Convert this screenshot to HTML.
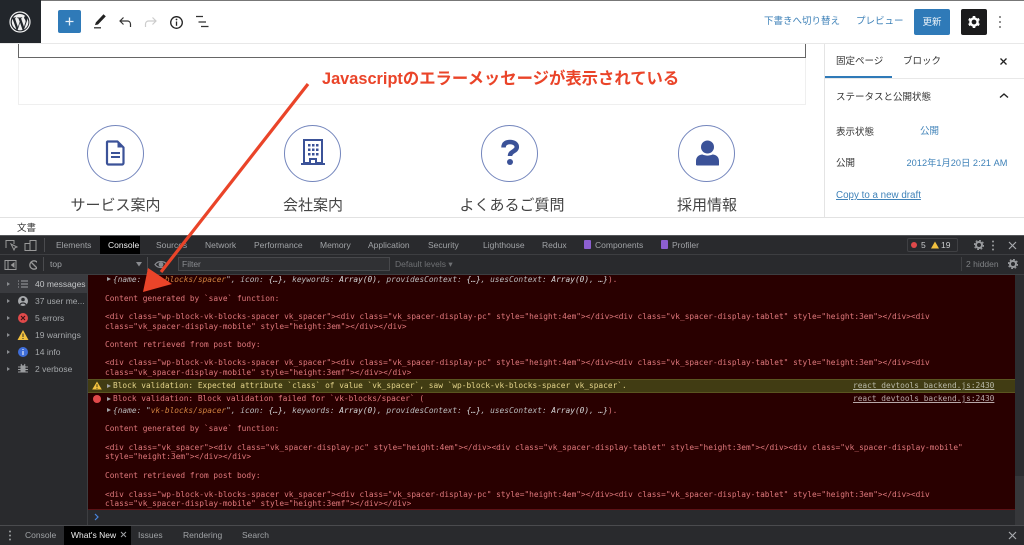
<!DOCTYPE html>
<html><head><meta charset="utf-8"><style>
*{box-sizing:border-box}
html,body{margin:0;padding:0;background:#fff}
#p{position:relative;width:1024px;height:545px;overflow:hidden;background:#fff;font-family:"Liberation Sans","Noto Sans CJK JP",sans-serif;color:#333;filter:blur(.35px)}
#p div,#p a,#p span.a{position:absolute;white-space:nowrap}
.t{font-size:9.5px;line-height:12px}
.b{color:#3f82b8}
.d{font-size:8.5px;line-height:12px;color:#a0a3a6}
.m{font-family:"DejaVu Sans Mono","Liberation Mono",monospace;font-size:7.83px;line-height:10px;color:#e0787c;left:105px}
.m i{color:#b9babc}.m b{font-weight:normal;color:#d6d7d9;font-style:italic}.m u{text-decoration:none;color:#d0813f}
.lab{font-size:15px;line-height:20px;top:196px;color:#444;transform:translateX(-50%)}
.c{width:57px;height:57px;border:1px solid #7486bd;border-radius:50%;top:125px}
.s{font-size:8.5px;line-height:12px;color:#a4a7aa;left:35px}
.tri{width:0;height:0;border-left:3.5px solid #8a8c90;border-top:2.5px solid transparent;border-bottom:2.5px solid transparent;left:7px}
</style></head><body><div id="p">
<div style="left:0;top:0;width:1024px;height:1px;background:#777"></div>
<div style="left:0;top:43px;width:1024px;height:1px;background:#e8e8e8"></div>
<div style="left:0;top:0;width:41px;height:43px;background:#22262b"></div>
<svg style="position:absolute;left:9px;top:11px" width="22" height="22" viewBox="0 0 22 22"><circle cx="11" cy="11" r="10" fill="none" stroke="#f1f1f1" stroke-width="1.2"/><path d="M2.8 11c0 3.2 1.9 6 4.6 7.4L3.5 7.7A8.2 8.2 0 0 0 2.8 11zM16.6 10.6c0-1-.4-1.700-.7-2.200-.4-.7-.8-1.200-.8-1.900 0-.7.6-1.400 1.300-1.400A8.200 8.200 0 0 0 4.100 6.500h.5c.9 0 2.200-.1 2.200-.1.400 0 .5.600 0 .7l-.9.100 3 8.800 1.800-5.300-1.300-3.500-.9-.100c-.4 0-.4-.7 0-.7 0 0 1.400.1 2.200.1.900 0 2.200-.1 2.200-.1.400 0 .5.600 0 .7l-.9.100 3 8.700.8-2.800c.4-1.100.7-1.900.7-2.500zM11.100 11.800l-2.500 7.200a8.200 8.200 0 0 0 5-.1l-.1-.1zM18.200 7.100c0 .3.100.6.100.9 0 .8-.2 1.800-.7 3l-2.600 7.500a8.200 8.200 0 0 0 3.200-11.400z" fill="#f1f1f1"/></svg>
<div style="left:58px;top:10px;width:23px;height:23px;background:#2f7ab8;border-radius:2px"></div>
<svg style="position:absolute;left:58px;top:10px" width="23" height="23"><path d="M11.500 7.500v8M7.500 11.500h8" stroke="#e6f0f8" stroke-width="1.300"/></svg>
<svg style="position:absolute;left:92px;top:11px" width="16" height="18"><path d="M3.800 11.500 11.500 3.300l2.300 2.100-7.800 8.100-3 .6z" fill="#222"/><path d="M2 16.800h7" stroke="#333" stroke-width="1.300"/></svg>
<svg style="position:absolute;left:118px;top:15px" width="14" height="15" fill="none" stroke="#333" stroke-width="1.200"><path d="M2 6h7.500a3 3 0 0 1 3 3v3M5.500 2.500 2 6l3.500 3.500"/></svg>
<svg style="position:absolute;left:144px;top:15px" width="14" height="15" fill="none" stroke="#ccc" stroke-width="1.200"><path d="M12 6H4.500a3 3 0 0 0-3 3v3M8.500 2.500 12 6 8.500 9.500"/></svg>
<svg style="position:absolute;left:169px;top:15px" width="15" height="15" fill="none"><circle cx="7.500" cy="7.500" r="5.800" stroke="#222" stroke-width="1.300"/><path d="M7.500 6.500v4.300" stroke="#222" stroke-width="1.300"/><circle cx="7.500" cy="4.500" r=".9" fill="#222"/></svg>
<svg style="position:absolute;left:195px;top:15px" width="15" height="14" stroke="#333" stroke-width="1.200"><path d="M1 1.500h7M3.500 7h7.500M6 11.500h7.500"/></svg>
<div class="t b" style="left:764px;top:16px">下書きへ切り替え</div>
<div class="t b" style="left:856px;top:16px">プレビュー</div>
<div class="t" style="left:914px;top:9px;width:36px;height:26px;background:#2f7ab8;border-radius:2px;color:#e8f1f8;text-align:center;line-height:27px">更新</div>
<div style="left:961px;top:9px;width:26px;height:26px;background:#1b1b1c;border-radius:2px"></div>
<svg style="position:absolute;left:966px;top:14px" width="16" height="16" viewBox="0 0 16 16"><circle cx="8" cy="8" r="3.600" fill="none" stroke="#fff" stroke-width="2.400"/><path d="M8 2v2.500M8 11.500V14M2.800 5l2.200 1.300M11 9.700l2.200 1.300M2.800 11 5 9.700M11 6.300 13.200 5" stroke="#fff" stroke-width="2.600"/></svg>
<svg style="position:absolute;left:998px;top:15px" width="4" height="14" fill="#444"><circle cx="2" cy="2" r=".9"/><circle cx="2" cy="7" r=".9"/><circle cx="2" cy="12" r=".9"/></svg>
<div style="left:18px;top:44px;width:788px;height:61px;border:1px solid #efefef;border-top:0"></div>
<div style="left:18px;top:44px;width:788px;height:14px;border:1px solid #666;border-top:0"></div>
<div style="left:824px;top:44px;width:1px;height:173px;background:#e4e4e4"></div>
<div style="left:825px;top:78px;width:199px;height:1px;background:#e8e8e8"></div>
<div style="left:825px;top:76px;width:67px;height:2px;background:#2f7ab8"></div>
<div class="t" style="left:836px;top:56px">固定ページ</div>
<div class="t" style="left:903px;top:56px">ブロック</div>
<svg style="position:absolute;left:999px;top:57px" width="10" height="10" stroke="#222" stroke-width="1.300"><path d="M1.500 1.500l6 6M7.500 1.500l-6 6"/></svg>
<div class="t" style="left:836px;top:92px">ステータスと公開状態</div>
<svg style="position:absolute;left:998px;top:92px" width="12" height="8" fill="none" stroke="#222" stroke-width="1.400"><path d="M2 5.500 6 2l4 3.500"/></svg>
<div class="t" style="left:836px;top:127px">表示状態</div>
<div class="t b" style="left:920px;top:126px">公開</div>
<div class="t" style="left:836px;top:158px">公開</div>
<div class="b" style="left:906.500px;top:157px;font-size:9.200px;line-height:12px;letter-spacing:.05px">2012年1月20日 2:21 AM</div>
<div class="b" style="left:836px;top:190px;text-decoration:underline;font-size:9.800px;line-height:12px">Copy to a new draft</div>
<div class="c" style="left:87px"></div><div class="c" style="left:284px"></div><div class="c" style="left:481px"></div><div class="c" style="left:678px"></div>
<svg style="position:absolute;left:105px;top:140px" width="21" height="26" viewBox="0 0 21 26"><path d="M2.500 1.500h10l6 6v15.500a1.500 1.500 0 0 1-1.500 1.500H3.500a1.500 1.500 0 0 1-1.500-1.500V2z" fill="#fff" stroke="#3b5298" stroke-width="2.200" stroke-linejoin="round"/><path d="M12.500 1.500v6h6z" fill="#3b5298"/><path d="M6 13h9M6 17h9" stroke="#3b5298" stroke-width="2"/></svg>
<svg style="position:absolute;left:301px;top:139px" width="24" height="27" fill="#3b5298"><path d="M0 24h24v2H0z"/><path d="M3 1h18v23h-6v-4h-6v4H3z" fill="none" stroke="#3b5298" stroke-width="2"/><path d="M7 5h2.500v2.500H7zM11 5h2.500v2.500H11zM15 5h2.500v2.500H15zM7 9.500h2.500V12H7zM11 9.500h2.500V12H11zM15 9.500h2.500V12H15zM7 14h2.500v2.500H7zM11 14h2.500v2.500H11zM15 14h2.500v2.500H15z"/></svg>
<svg style="position:absolute;left:500px;top:139px" width="20" height="27" viewBox="0 0 20 27"><path d="M3.500 8.500C3.500 4 7 3 10 3c4 0 6.800 2 6.800 5 0 4.500-6.800 4-6.800 9" fill="none" stroke="#3b5298" stroke-width="4.500"/><circle cx="10" cy="23" r="3" fill="#3b5298"/></svg>
<svg style="position:absolute;left:695px;top:139px" width="25" height="27" fill="#3b5298"><circle cx="12.500" cy="8" r="6.500"/><path d="M1 26v-4c0-4 3-6.500 6.500-6.500 1.500.7 3.200 1.100 5 1.100s3.500-.4 5-1.100c3.500 0 6.500 2.500 6.500 6.500v4a.5.500 0 0 1-.5.500H2z"/></svg>
<div class="lab" style="left:115.500px">サービス案内</div>
<div class="lab" style="left:313px">会社案内</div>
<div class="lab" style="left:512px">よくあるご質問</div>
<div class="lab" style="left:707px">採用情報</div>
<div style="left:322px;top:69px;font-size:16.350px;line-height:20px;font-weight:bold;color:#ea4429">Javascriptのエラーメッセージが表示されている</div>
<div style="left:0;top:217px;width:1024px;height:1px;background:#e2e2e2"></div>
<div class="t" style="left:17px;top:223px">文書</div>

<div style="left:0;top:235px;width:1024px;height:310px;background:#292a2d"></div>
<div style="left:0;top:235px;width:1024px;height:1px;background:#55575a"></div>
<div style="left:0;top:254px;width:1024px;height:1px;background:#3d3e41"></div>
<div style="left:0;top:274px;width:1024px;height:1px;background:#3d3e41"></div>
<div style="left:100px;top:236px;width:40px;height:18px;background:#000"></div>
<svg style="position:absolute;left:5px;top:239px" width="32" height="13" fill="none" stroke="#999" stroke-width="1"><path d="M1 9V1.500h8V5M6 5l3 6 1-2.200 2-.8z"/><path d="M25 1.500h6v10h-6zM20 4.500h5v7h-5z"/></svg>
<div style="left:44px;top:238px;width:1px;height:14px;background:#4a4b4e"></div>
<div class="d" style="left:56px;top:239px">Elements</div>
<div class="d" style="left:108px;top:239px;color:#eee">Console</div>
<div class="d" style="left:156px;top:239px">Sources</div>
<div class="d" style="left:205px;top:239px">Network</div>
<div class="d" style="left:254px;top:239px">Performance</div>
<div class="d" style="left:320px;top:239px">Memory</div>
<div class="d" style="left:368px;top:239px">Application</div>
<div class="d" style="left:428px;top:239px">Security</div>
<div class="d" style="left:483px;top:239px">Lighthouse</div>
<div class="d" style="left:542px;top:239px">Redux</div>
<div style="left:584px;top:240px;width:7px;height:9px;background:#8c5fd0;border-radius:1px"></div>
<div class="d" style="left:595px;top:239px">Components</div>
<div style="left:661px;top:240px;width:7px;height:9px;background:#8c5fd0;border-radius:1px"></div>
<div class="d" style="left:672px;top:239px">Profiler</div>
<div style="left:907px;top:238px;width:51px;height:14px;border:1px solid #3f4043;border-radius:2px"></div>
<div style="left:911px;top:242px;width:6px;height:6px;border-radius:50%;background:#e0494a"></div>
<div class="d" style="left:921px;top:239px;color:#c9cbcd">5</div>
<svg style="position:absolute;left:931px;top:241px" width="8" height="8"><path d="M4 .5 8 7.500H0z" fill="#f2c13f"/></svg>
<div class="d" style="left:941px;top:239px;color:#c9cbcd">19</div>
<svg style="position:absolute;left:974px;top:240px" width="10" height="10"><circle cx="5" cy="5" r="3" fill="none" stroke="#9a9c9f" stroke-width="2"/><circle cx="5" cy="5" r="4.600" fill="none" stroke="#9a9c9f" stroke-width="1.200" stroke-dasharray="1.800 1.800"/></svg>
<svg style="position:absolute;left:991px;top:240px" width="4" height="11" fill="#9a9c9f"><circle cx="2" cy="1.500" r="1"/><circle cx="2" cy="5.500" r="1"/><circle cx="2" cy="9.500" r="1"/></svg>
<svg style="position:absolute;left:1008px;top:241px" width="9" height="9" stroke="#a8aaad" stroke-width="1.200"><path d="M1 1l7 7M8 1 1 8"/></svg>

<svg style="position:absolute;left:4px;top:259px" width="33" height="12" fill="none" stroke="#999" stroke-width="1"><path d="M1 1.500h11v9H1zM4 1.500v9"/><path d="M10 4 7.500 6 10 8z" fill="#999"/><circle cx="30" cy="6" r="4.200" stroke-width="1.300"/><path d="M27 3l6 6" stroke-width="1.300"/></svg>
<div style="left:43px;top:257px;width:1px;height:14px;background:#4a4b4e"></div>
<div class="d" style="left:50px;top:258px">top</div>
<svg style="position:absolute;left:136px;top:262px" width="7" height="5"><path d="M0 0h6L3 4.500z" fill="#8a8c90"/></svg>
<div style="left:147px;top:257px;width:1px;height:14px;background:#4a4b4e"></div>
<svg style="position:absolute;left:154px;top:260px" width="14" height="9" fill="none" stroke="#8a8c90" stroke-width="1.200"><path d="M1 4.500C4 .5 10 .5 13 4.500 10 8.500 4 8.500 1 4.500z"/><circle cx="7" cy="4.500" r="1.800" fill="#8a8c90"/></svg>
<div style="left:178px;top:257px;width:212px;height:14px;background:#303134;border:1px solid #47484b"></div>
<div class="d" style="left:182px;top:258px;color:#8a8c90">Filter</div>
<div class="d" style="left:395px;top:258px;color:#6f7174">Default levels ▾</div>
<div style="left:961px;top:257px;width:1px;height:14px;background:#3f4043"></div>
<div class="d" style="left:966px;top:258px;color:#7e8083">2 hidden</div>
<svg style="position:absolute;left:1008px;top:259px" width="10" height="10"><circle cx="5" cy="5" r="3" fill="none" stroke="#9a9c9f" stroke-width="2"/><circle cx="5" cy="5" r="4.600" fill="none" stroke="#9a9c9f" stroke-width="1.200" stroke-dasharray="1.800 1.800"/></svg>

<div style="left:0;top:275px;width:88px;height:18px;background:#3a3b3f"></div>
<div style="left:87px;top:275px;width:1px;height:250px;background:#3d3e41"></div>
<div class="tri" style="top:282px"></div><div class="tri" style="top:299px"></div><div class="tri" style="top:316px"></div><div class="tri" style="top:333px"></div><div class="tri" style="top:350px"></div><div class="tri" style="top:367px"></div>
<svg style="position:absolute;left:17px;top:279px" width="12" height="100" fill="none"><path d="M1 2h1M4 2h7M1 5h1M4 5h7M1 8h1M4 8h7" stroke="#a0a2a5"/><circle cx="6" cy="22" r="5" fill="#a8aaad"/><circle cx="6" cy="20.500" r="1.800" fill="#292a2d"/><path d="M2.800 25.800a3.500 3 0 0 1 6.400 0" stroke="#292a2d" stroke-width="1.200"/><circle cx="6" cy="39" r="5" fill="#e0494a"/><path d="M4 37l4 4M8 37l-4 4" stroke="#3a1315" stroke-width="1.100"/><path d="M6 51 11.500 61H.5z" fill="#f2c13f"/><path d="M6 54.500v3.500M6 59v1" stroke="#292a2d"/><circle cx="6" cy="73" r="5" fill="#3f6ed8"/><path d="M6 72v4M6 70v1" stroke="#dfe7fa" stroke-width="1.200"/><path d="M3.500 86.500h5v7h-5z" fill="#9a9c9f"/><path d="M1 88h10M1 90.500h10M1 93h10M4 85l1 2M8 85 7 87" stroke="#9a9c9f"/></svg>
<div class="s" style="top:278px;color:#c2c4c6">40 messages</div>
<div class="s" style="top:295px">37 user me...</div>
<div class="s" style="top:312px">5 errors</div>
<div class="s" style="top:329px">19 warnings</div>
<div class="s" style="top:346px">14 info</div>
<div class="s" style="top:363px">2 verbose</div>

<div style="left:88px;top:275px;width:927px;height:234.500px;background:#290000"></div>
<div style="left:88px;top:379px;width:927px;height:14px;background:#413c13;border-top:1px solid #5a5520;border-bottom:1px solid #5a5520"></div>
<div style="left:88px;top:509px;width:927px;height:1px;background:#5c1216"></div>
<div style="left:1015px;top:275px;width:9px;height:250px;background:#2b2c2f"></div>
<div style="left:1015px;top:476px;width:9px;height:49px;background:#36373a"></div>

<div style="left:107px;top:277px;width:0;height:0;border-left:4px solid #a0a2a5;border-top:2.500px solid transparent;border-bottom:2.500px solid transparent"></div>
<div class="m" style="left:113px;top:275px"><b><i>{name: "</i><u>vk-blocks/spacer</u><i>", icon: </i>{…}<i>, keywords: </i>Array(0)<i>, providesContext: </i>{…}<i>, usesContext: </i>Array(0)<i>, </i>…}</b>).</div>
<div class="m" style="top:294px">Content generated by `save` function:</div>
<div class="m" style="top:312px">&lt;div class="wp-block-vk-blocks-spacer vk_spacer"&gt;&lt;div class="vk_spacer-display-pc" style="height:4em"&gt;&lt;/div&gt;&lt;div class="vk_spacer-display-tablet" style="height:3em"&gt;&lt;/div&gt;&lt;div</div>
<div class="m" style="top:322px">class="vk_spacer-display-mobile" style="height:3em"&gt;&lt;/div&gt;&lt;/div&gt;</div>
<div class="m" style="top:340px">Content retrieved from post body:</div>
<div class="m" style="top:358px">&lt;div class="wp-block-vk-blocks-spacer vk_spacer"&gt;&lt;div class="vk_spacer-display-pc" style="height:4em"&gt;&lt;/div&gt;&lt;div class="vk_spacer-display-tablet" style="height:3em"&gt;&lt;/div&gt;&lt;div</div>
<div class="m" style="top:368px">class="vk_spacer-display-mobile" style="height:3emf"&gt;&lt;/div&gt;&lt;/div&gt;</div>

<svg style="position:absolute;left:92px;top:381px" width="10" height="9"><path d="M5 .5 9.800 8.500H.2z" fill="#f2c13f"/><path d="M5 3.200v2.800M5 6.800v1" stroke="#413c13"/></svg>
<div style="left:107px;top:384px;width:0;height:0;border-left:4px solid #a0a2a5;border-top:2.500px solid transparent;border-bottom:2.500px solid transparent"></div>
<div class="m" style="left:113px;top:381px;color:#e3d38a">Block validation: Expected attribute `class` of value `vk_spacer`, saw `wp-block-vk-blocks-spacer vk_spacer`.</div>
<div class="m" style="left:853px;top:381px;color:#b9b9a8;text-decoration:underline">react_devtools_backend.js:2430</div>
<div style="left:93px;top:395px;width:8px;height:8px;border-radius:50%;background:#e0494a"></div>
<div style="left:107px;top:397px;width:0;height:0;border-left:4px solid #a0a2a5;border-top:2.500px solid transparent;border-bottom:2.500px solid transparent"></div>
<div class="m" style="left:113px;top:394px">Block validation: Block validation failed for `vk-blocks/spacer` (</div>
<div class="m" style="left:853px;top:394px;color:#b8a8a8;text-decoration:underline">react_devtools_backend.js:2430</div>
<div style="left:107px;top:408px;width:0;height:0;border-left:4px solid #a0a2a5;border-top:2.500px solid transparent;border-bottom:2.500px solid transparent"></div>
<div class="m" style="left:113px;top:406px"><b><i>{name: "</i><u>vk-blocks/spacer</u><i>", icon: </i>{…}<i>, keywords: </i>Array(0)<i>, providesContext: </i>{…}<i>, usesContext: </i>Array(0)<i>, </i>…}</b>).</div>
<div class="m" style="top:424px">Content generated by `save` function:</div>
<div class="m" style="top:443px">&lt;div class="vk_spacer"&gt;&lt;div class="vk_spacer-display-pc" style="height:4em"&gt;&lt;/div&gt;&lt;div class="vk_spacer-display-tablet" style="height:3em"&gt;&lt;/div&gt;&lt;div class="vk_spacer-display-mobile"</div>
<div class="m" style="top:452px">style="height:3em"&gt;&lt;/div&gt;&lt;/div&gt;</div>
<div class="m" style="top:471px">Content retrieved from post body:</div>
<div class="m" style="top:490px">&lt;div class="wp-block-vk-blocks-spacer vk_spacer"&gt;&lt;div class="vk_spacer-display-pc" style="height:4em"&gt;&lt;/div&gt;&lt;div class="vk_spacer-display-tablet" style="height:3em"&gt;&lt;/div&gt;&lt;div</div>
<div class="m" style="top:499px">class="vk_spacer-display-mobile" style="height:3emf"&gt;&lt;/div&gt;&lt;/div&gt;</div>
<svg style="position:absolute;left:93px;top:513px" width="7" height="8" fill="none" stroke="#4a86e0" stroke-width="1.200"><path d="M2 1l3 3-3 3"/></svg>

<div style="left:0;top:525px;width:1024px;height:1px;background:#4a4b4e"></div>
<div style="left:64px;top:526px;width:67px;height:19px;background:#000"></div>
<svg style="position:absolute;left:8px;top:530px" width="4" height="12" fill="#9a9c9f"><circle cx="2" cy="1.500" r="1"/><circle cx="2" cy="5.500" r="1"/><circle cx="2" cy="9.500" r="1"/></svg>
<div class="d" style="left:25px;top:529px">Console</div>
<div class="d" style="left:71px;top:529px;color:#eee">What's New</div>
<svg style="position:absolute;left:120px;top:531px" width="8" height="8" stroke="#a0a2a5"><path d="M1 1l5 5M6 1 1 6"/></svg>
<div class="d" style="left:138px;top:529px">Issues</div>
<div class="d" style="left:183px;top:529px">Rendering</div>
<div class="d" style="left:242px;top:529px">Search</div>
<svg style="position:absolute;left:1008px;top:531px" width="9" height="9" stroke="#a8aaad" stroke-width="1.200"><path d="M1 1l7 7M8 1 1 8"/></svg>

<svg style="position:absolute;left:0;top:0" width="1024" height="545"><path d="M308 84 161 272" stroke="#ea4429" stroke-width="3.200" fill="none"/><path d="M143 292 148 268 172 284z" fill="#ea4429"/></svg>
</div></body></html>
